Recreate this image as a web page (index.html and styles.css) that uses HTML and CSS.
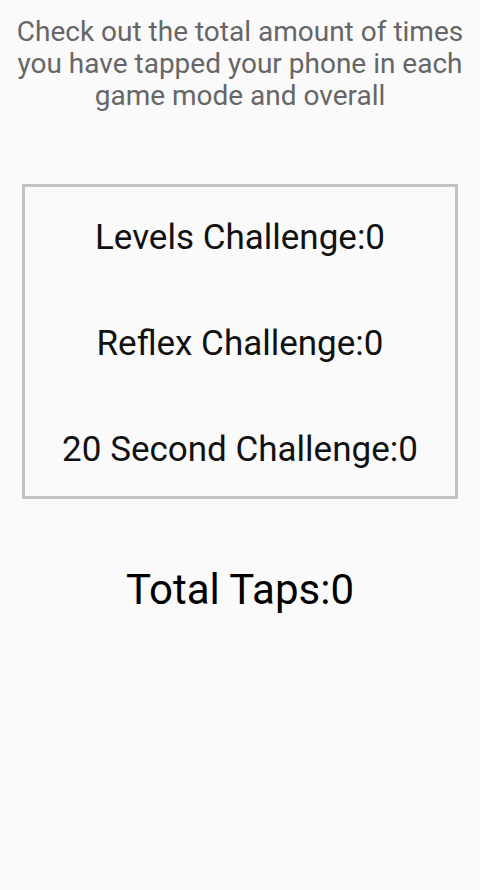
FILE: index.html
```html
<!DOCTYPE html>
<html lang="en">
<head>
    <meta charset="UTF-8">
    <title>Total Taps</title>
    <link rel="stylesheet" href="styles.css">
</head>
<body>
<p class="intro">Check out the total amount of times you have tapped your phone in each game mode and overall</p>

<div class="stats-box">
    <div class="stat">Levels Challenge:0</div>
    <div class="stat">Reflex Challenge:0</div>
    <div class="stat">20 Second Challenge:0</div>
</div>

<div class="total">Total Taps:0</div>
</body>
</html>
```

FILE: styles.css
```css
body {
    margin: 0;
    font-family: 'Roboto', sans-serif;
    background-color: #fafafa;
    display: flex;
    flex-direction: column;
    align-items: center;
}

.intro {
    margin: 16px 8px 0;
    font-size: 28px;
    line-height: 32px;
    color: #666;
    text-align: center;
}

.stats-box {
    margin-top: 72px;
    width: 436px;
    height: 315px;
    padding-top: 30px;
    box-sizing: border-box;
    border: 3px solid #c2c2c2;
    display: flex;
    flex-direction: column;
    align-items: center;
    gap: 65px;
}

.stat {
    font-size: 35px;
    line-height: 41px;
    color: #111;
}

.total {
    margin-top: 66px;
    font-size: 42px;
    color: #000;
}
```
